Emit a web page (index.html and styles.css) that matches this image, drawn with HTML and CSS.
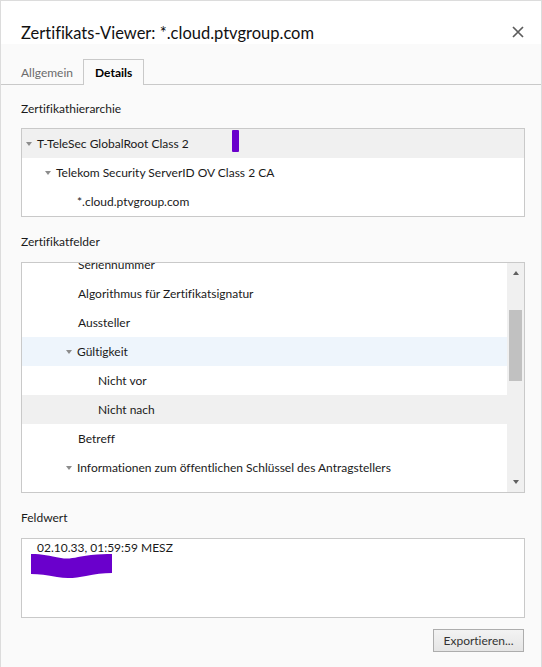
FILE: index.html
```html
<!DOCTYPE html>
<html lang="de">
<head>
<meta charset="utf-8">
<title>Zertifikats-Viewer</title>
<link rel="stylesheet" href="styles.css">
</head>
<body>
<div class="dialog">
  <div class="header">
    <h1 class="title">Zertifikats-Viewer: *.cloud.ptvgroup.com</h1>
    <button class="close" aria-label="Schließen"><svg width="12" height="12" viewBox="0 0 12 12"><path d="M1 1L11 11M11 1L1 11" stroke="#5c5c5c" stroke-width="1.7" fill="none"/></svg></button>
  </div>
  <div class="tabs">
    <div class="tab first">Allgemein</div>
    <div class="tab active">Details</div>
  </div>
  <div class="content">
    <div class="label first">Zertifikathierarchie</div>
    <div class="box hierarchy">
      <div class="row h0 hover"><span class="tri"></span>T-TeleSec GlobalRoot Class 2</div>
      <div class="row h1"><span class="tri"></span>Telekom Security ServerID OV Class 2 CA</div>
      <div class="row h2">*.cloud.ptvgroup.com</div>
      <span class="redact-bar"></span>
    </div>

    <div class="label">Zertifikatfelder</div>
    <div class="box fields">
      <div class="list">
        <div class="list-inner">
          <div class="row f1">Seriennummer</div>
          <div class="row f1">Algorithmus für Zertifikatsignatur</div>
          <div class="row f1">Aussteller</div>
          <div class="row f1t selected"><span class="tri"></span>Gültigkeit</div>
          <div class="row f2">Nicht vor</div>
          <div class="row f2 hover">Nicht nach</div>
          <div class="row f1">Betreff</div>
          <div class="row f1t"><span class="tri"></span>Informationen zum öffentlichen Schlüssel des Antragstellers</div>
          <div class="row f2">Algorithmus für öffentlichen Schlüssel des Antragstellers</div>
        </div>
      </div>
      <div class="scrollbar">
        <div class="sb-btn"><span class="arrow up"></span></div>
        <div class="sb-thumb"></div>
        <div class="sb-space"></div>
        <div class="sb-btn"><span class="arrow down"></span></div>
      </div>
    </div>

    <div class="label">Feldwert</div>
    <div class="box value">
      <div class="value-text">02.10.33, 01:59:59 MESZ</div>
      <svg class="scribble" width="81" height="26" viewBox="0 0 81 26"><path d="M0 1 C12 1 18 3 30 5 C40 7 48 3 60 2 C68 1 75 1 81 1 L81 20 C72 20 64 21 55 23 C45 25 36 26 26 24 C16 22 8 21 0 21 Z" fill="#6a00cc"/></svg>
    </div>

    <button class="btn">Exportieren...</button>
  </div>
</div>
</body>
</html>
```
FILE: styles.css
```css
* { box-sizing: border-box; }
html, body { margin: 0; padding: 0; }
body {
  font-family: "Segoe UI", Lato, "Noto Sans", sans-serif;
  font-size: 12px;
  font-variant-ligatures: none;
  color: #1a1a1a;
  background: #ffffff;
}
.dialog {
  width: 542px;
  height: 667px;
  background: #fafafa;
  border: 1px solid #dcdcdc;
  border-bottom: none;
  display: flex;
  flex-direction: column;
}
.header {
  height: 43px;
  background: #ffffff;
  display: flex;
  justify-content: space-between;
  align-items: flex-start;
  padding: 22px 0 0 20px;
}
.title {
  margin: 0;
  font-size: 16.5px;
  font-weight: normal;
  line-height: 20px;
  color: #111;
}
.close {
  border: 0;
  background: none;
  padding: 0;
  width: 12px;
  height: 12px;
  margin: 3px 17px 0 0;
  display: block;
}
.close svg { display: block; }
.tabs {
  height: 41px;
  display: flex;
  align-items: flex-end;
  padding-left: 8px;
  border-bottom: 1px solid #c9c9c9;
}
.tab {
  height: 26px;
  padding: 5px 11px 0;
  line-height: 16px;
  border: 1px solid transparent;
  border-bottom: 0;
  margin-bottom: -1px;
  color: #6b6b6b;
}
.tab.first { padding: 5px 9px 0 11px; }
.tab.active {
  border-color: #c9c9c9;
  background: #fafafa;
  color: #000;
  font-weight: bold;
}
.content {
  padding: 0 16px 0 20px;
  display: flex;
  flex-direction: column;
}
.label {
  line-height: 16px;
  margin: 17px 0 12px;
  color: #1a1a1a;
}
.label.first { margin: 16px 0 11px; }
.box {
  background: #ffffff;
  border: 1px solid #c9c9c9;
  position: relative;
}
.row {
  height: 29px;
  display: flex;
  align-items: center;
  white-space: nowrap;
  color: #1a1a1a;
}
.row.hover { background: #f0f0f0; }
.row.selected { background: #eef5fc; }
.tri {
  display: inline-block;
  width: 0;
  height: 0;
  border-left: 3.5px solid transparent;
  border-right: 3.5px solid transparent;
  border-top: 4px solid #8c8c8c;
  margin-right: 5px;
}
.h0 { padding-left: 4px; }
.h1 { padding-left: 23px; }
.h2 { padding-left: 55px; }
.f1 { padding-left: 56px; }
.f1t { padding-left: 44px; }
.f2 { padding-left: 76px; }
.redact-bar {
  position: absolute;
  left: 210px;
  top: 1px;
  width: 7px;
  height: 22px;
  background: #6a00cc;
  border-radius: 1px;
}
.fields {
  height: 231px;
  display: flex;
}
.list {
  flex: 1;
  overflow: hidden;
}
.list-inner { margin-top: -13px; }
.scrollbar {
  width: 17px;
  background: #f0f0f0;
  display: flex;
  flex-direction: column;
  align-items: center;
}
.sb-btn {
  height: 20px;
  width: 100%;
  display: flex;
  align-items: center;
  justify-content: center;
}
.arrow {
  width: 0;
  height: 0;
  border-left: 3.5px solid transparent;
  border-right: 3.5px solid transparent;
}
.arrow.up { border-bottom: 4px solid #606060; }
.arrow.down { border-top: 4px solid #606060; }
.sb-thumb {
  margin-top: 27px;
  width: 13px;
  height: 71px;
  background: #c1c1c1;
}
.sb-space { flex: 1; }
.value {
  height: 80px;
  padding: 1px 15px;
}
.value-text { line-height: 16px; }
.scribble {
  position: absolute;
  left: 9px;
  top: 14px;
}
.btn {
  align-self: flex-end;
  margin: 11px 1px 0 0;
  width: 91px;
  height: 23px;
  border: 1px solid #adadad;
  background: linear-gradient(#f3f3f3, #e5e5e5);
  font: inherit;
  color: #333;
  padding: 0;
}
```
